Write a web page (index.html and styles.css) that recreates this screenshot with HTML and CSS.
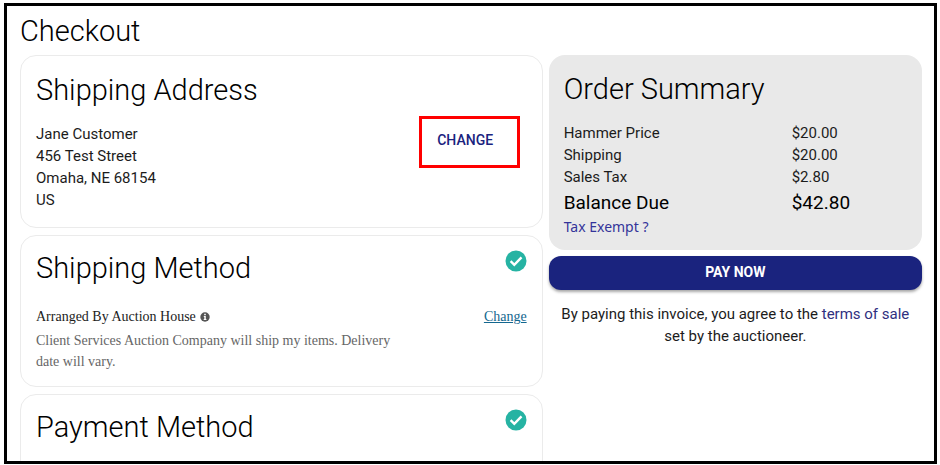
FILE: index.html
```html
<!DOCTYPE html>
<html lang="en">
<head>
  <meta charset="UTF-8" />
  <meta name="viewport" content="width=device-width, initial-scale=1.0" />
  <title>Checkout</title>
  <link rel="stylesheet" href="styles.css">
</head>
<body>
  <div class="frame">
    <h1>Checkout</h1>

    <div class="columns">
      <main class="steps">
        <section class="card">
          <h2>Shipping Address</h2>
          <div class="address-row">
            <address>
              Jane Customer<br>
              456 Test Street<br>
              Omaha, NE 68154<br>
              US
            </address>
            <button type="button" class="change-btn">CHANGE</button>
          </div>
        </section>

        <section class="card card-done">
          <div class="card-head">
            <h2>Shipping Method</h2>
            <svg class="check" viewBox="0 0 22 22" aria-hidden="true">
              <circle cx="11" cy="11" r="10.5" />
              <path d="M5.6 11.2l3.7 3.6 7.2-7.4" />
            </svg>
          </div>
          <div class="method">
            <div class="method-row">
              <span class="method-name">Arranged By Auction House
                <svg class="info" viewBox="0 0 10 10" aria-hidden="true">
                  <circle cx="5" cy="5" r="4.7" />
                  <path d="M4.2 1.8h1.6v1.4H4.2zM3.8 4.1h2v2.8h.6v1H3.7v-1h.6V5h-.5z" />
                </svg>
              </span>
              <a href="#" class="change-link">Change</a>
            </div>
            <p class="method-note">Client Services Auction Company will ship my items. Delivery date will vary.</p>
          </div>
        </section>

        <section class="card card-done">
          <div class="card-head">
            <h2>Payment Method</h2>
            <svg class="check" viewBox="0 0 22 22" aria-hidden="true">
              <circle cx="11" cy="11" r="10.5" />
              <path d="M5.6 11.2l3.7 3.6 7.2-7.4" />
            </svg>
          </div>
        </section>
      </main>

      <aside class="side">
        <section class="summary">
          <h2>Order Summary</h2>
          <table>
            <tr><th scope="row">Hammer Price</th><td>$20.00</td></tr>
            <tr><th scope="row">Shipping</th><td>$20.00</td></tr>
            <tr><th scope="row">Sales Tax</th><td>$2.80</td></tr>
            <tr class="total"><th scope="row">Balance Due</th><td>$42.80</td></tr>
          </table>
          <a href="#" class="exempt">Tax Exempt ?</a>
        </section>
        <button type="button" class="pay-btn">PAY NOW</button>
        <p class="terms">By paying this invoice, you agree to the <a href="#">terms of sale</a> set by the auctioneer.</p>
      </aside>
    </div>
  </div>
</body>
</html>
```

FILE: styles.css
```css
* { box-sizing: border-box; }
body { margin: 0; padding: 3px 3px 1px 4px; background: #fff; color: #1c1c1c; font: 15px/22px Roboto, "Liberation Sans", sans-serif; }
h1, h2 { margin: 0; font-size: 29px; line-height: 36px; font-weight: 300; color: #000; }
a { color: #303080; text-decoration: none; }
p { margin: 0; }

.frame { height: calc(100vh - 4px); overflow: hidden; border: 3px solid #000; padding: 7px 12px 0 13px; }
.columns { display: grid; grid-template-columns: 7fr 5fr; gap: 6px; align-items: start; margin-top: 6px; }
.steps { display: grid; gap: 7px; }

.card { border: 1px solid #ebebeb; border-radius: 16px; padding: 16px 15px; }
.card-done { min-height: 152px; padding: 14px 15px; }
.card-head { display: flex; justify-content: space-between; align-items: flex-start; }
.address-row { display: flex; justify-content: space-between; align-items: flex-start; margin-top: 15px; }
address { font-style: normal; }
.change-btn { width: 101px; height: 52px; margin: -7px 7px 0 0; padding: 0 8px 4px 0; background: none; border: 3px solid #f00; color: #1a237e; font: 500 14px/20px Roboto, sans-serif; }
.check { width: 22px; height: 22px; }
.check circle { fill: #26b3a3; }
.check path { fill: none; stroke: #fff; stroke-width: 2.4; }

.method { margin-top: 20px; font-family: "Liberation Serif", serif; font-size: 14px; line-height: 21px; }
.method-row { display: flex; justify-content: space-between; }
.info { width: 10px; height: 10px; margin-left: 1px; vertical-align: -1px; }
.info circle { fill: #555; }
.info path { fill: #fff; }
.change-link { color: #14678f; text-decoration: underline; }
.method-note { max-width: 376px; margin-top: 3px; color: #666; }

.summary { background: #e9e9e9; border-radius: 16px; padding: 16px 15px 13px; }
.summary table { width: 100%; margin-top: 15px; border-collapse: collapse; table-layout: fixed; }
.summary th, .summary td { padding: 0; text-align: left; font-weight: 400; }
.summary th { width: 228px; }
.summary .total { font-size: 19px; line-height: 29px; color: #000; }
.exempt { display: block; font-family: "Noto Sans", sans-serif; font-size: 14px; line-height: 20px; color: #34349a; }

.pay-btn { display: block; width: 100%; height: 34px; margin-top: 6px; padding: 0 0 2px; border: 0; border-radius: 12px; background: #1a237e; color: #fff; font: 700 14px/20px Roboto, sans-serif; box-shadow: 0 2px 3px rgba(0,0,0,0.35); }
.terms { margin-top: 13px; padding: 0 8px; text-align: center; }
```
